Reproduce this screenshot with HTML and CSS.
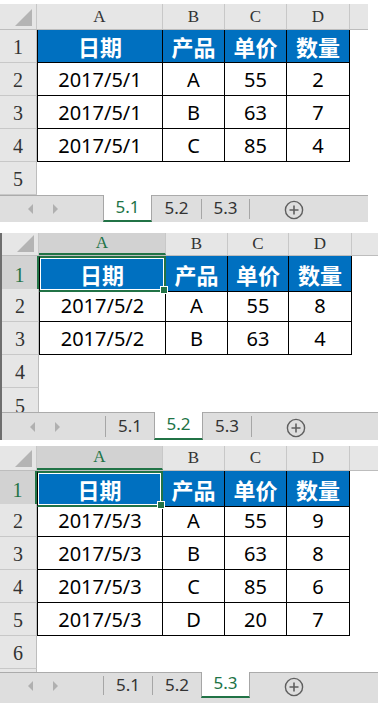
FILE: index.html
```html
<!DOCTYPE html>
<html lang="zh-CN">
<head>
    <meta charset="UTF-8">
    <meta name="viewport" content="width=device-width, initial-scale=1.0">
    <title>销售表 5.1 - 5.3</title>
    <link rel="stylesheet" href="styles.css">
</head>
<body>

    <!-- Sheet 5.1 -->
    <section class="sheet sheet-1">
        <div class="colhead">
            <div class="corner"><span class="tri"></span></div>
            <div class="ch">A</div>
            <div class="ch">B</div>
            <div class="ch">C</div>
            <div class="ch">D</div>
            <div class="ch fill"></div>
        </div>
        <div class="row">
            <div class="rh">1</div>
            <div class="cell hd first">日期</div>
            <div class="cell hd">产品</div>
            <div class="cell hd">单价</div>
            <div class="cell hd">数量</div>
        </div>
        <div class="row">
            <div class="rh">2</div>
            <div class="cell first">2017/5/1</div>
            <div class="cell">A</div>
            <div class="cell">55</div>
            <div class="cell">2</div>
        </div>
        <div class="row">
            <div class="rh">3</div>
            <div class="cell first">2017/5/1</div>
            <div class="cell">B</div>
            <div class="cell">63</div>
            <div class="cell">7</div>
        </div>
        <div class="row">
            <div class="rh">4</div>
            <div class="cell first">2017/5/1</div>
            <div class="cell">C</div>
            <div class="cell">85</div>
            <div class="cell">4</div>
        </div>
        <div class="row">
            <div class="rh">5</div>
        </div>
        <div class="tabs">
            <div class="nav"><span class="arr left"></span><span class="arr right"></span></div>
            <div class="tab active">5.1</div>
            <div class="tab">5.2</div>
            <div class="tab">5.3</div>
            <div class="add">
                <svg width="20" height="20" viewBox="0 0 20 20">
                    <circle cx="10" cy="10" r="8.6" fill="none" stroke="#5f5f5f" stroke-width="1.4"/>
                    <path d="M10 5.5v9M5.5 10h9" stroke="#5f5f5f" stroke-width="1.6"/>
                </svg>
            </div>
        </div>
    </section>

    <!-- Sheet 5.2 -->
    <section class="sheet sheet-2">
        <div class="colhead">
            <div class="corner"><span class="tri"></span></div>
            <div class="ch sel">A</div>
            <div class="ch">B</div>
            <div class="ch">C</div>
            <div class="ch">D</div>
            <div class="ch fill"></div>
        </div>
        <div class="row">
            <div class="rh sel">1</div>
            <div class="cell hd first active-cell">日期<span class="handle"></span></div>
            <div class="cell hd">产品</div>
            <div class="cell hd">单价</div>
            <div class="cell hd">数量</div>
        </div>
        <div class="row">
            <div class="rh">2</div>
            <div class="cell first">2017/5/2</div>
            <div class="cell">A</div>
            <div class="cell">55</div>
            <div class="cell">8</div>
        </div>
        <div class="row">
            <div class="rh">3</div>
            <div class="cell first">2017/5/2</div>
            <div class="cell">B</div>
            <div class="cell">63</div>
            <div class="cell">4</div>
        </div>
        <div class="row">
            <div class="rh">4</div>
        </div>
        <div class="row cut">
            <div class="rh">5</div>
        </div>
        <div class="tabs">
            <div class="nav"><span class="arr left"></span><span class="arr right"></span></div>
            <div class="tab">5.1</div>
            <div class="tab active">5.2</div>
            <div class="tab">5.3</div>
            <div class="add">
                <svg width="20" height="20" viewBox="0 0 20 20">
                    <circle cx="10" cy="10" r="8.6" fill="none" stroke="#5f5f5f" stroke-width="1.4"/>
                    <path d="M10 5.5v9M5.5 10h9" stroke="#5f5f5f" stroke-width="1.6"/>
                </svg>
            </div>
        </div>
    </section>

    <!-- Sheet 5.3 -->
    <section class="sheet sheet-3">
        <div class="colhead">
            <div class="corner"><span class="tri"></span></div>
            <div class="ch sel">A</div>
            <div class="ch">B</div>
            <div class="ch">C</div>
            <div class="ch">D</div>
            <div class="ch fill"></div>
        </div>
        <div class="row">
            <div class="rh sel">1</div>
            <div class="cell hd first active-cell">日期<span class="handle"></span></div>
            <div class="cell hd">产品</div>
            <div class="cell hd">单价</div>
            <div class="cell hd">数量</div>
        </div>
        <div class="row">
            <div class="rh">2</div>
            <div class="cell first">2017/5/3</div>
            <div class="cell">A</div>
            <div class="cell">55</div>
            <div class="cell">9</div>
        </div>
        <div class="row">
            <div class="rh">3</div>
            <div class="cell first">2017/5/3</div>
            <div class="cell">B</div>
            <div class="cell">63</div>
            <div class="cell">8</div>
        </div>
        <div class="row">
            <div class="rh">4</div>
            <div class="cell first">2017/5/3</div>
            <div class="cell">C</div>
            <div class="cell">85</div>
            <div class="cell">6</div>
        </div>
        <div class="row">
            <div class="rh">5</div>
            <div class="cell first">2017/5/3</div>
            <div class="cell">D</div>
            <div class="cell">20</div>
            <div class="cell">7</div>
        </div>
        <div class="row">
            <div class="rh">6</div>
        </div>
        <div class="row sliver">
            <div class="rh"></div>
        </div>
        <div class="tabs">
            <div class="nav"><span class="arr left"></span><span class="arr right"></span></div>
            <div class="tab">5.1</div>
            <div class="tab">5.2</div>
            <div class="tab active">5.3</div>
            <div class="add">
                <svg width="20" height="20" viewBox="0 0 20 20">
                    <circle cx="10" cy="10" r="8.6" fill="none" stroke="#5f5f5f" stroke-width="1.4"/>
                    <path d="M10 5.5v9M5.5 10h9" stroke="#5f5f5f" stroke-width="1.6"/>
                </svg>
            </div>
        </div>
    </section>

</body>
</html>
```

FILE: styles.css
```css
/* Basic reset */
html, body {
    margin: 0;
    padding: 0;
    background: #fff;
}

body {
    width: 378px;
    overflow: hidden;
}

/* One screenshot of a worksheet */
.sheet {
    --rh: 37px;
    --a: 126px;
    --b: 62px;
    --c: 62px;
    --d: 63px;
    --hh: 26px;
    --row: 33px;
    display: flex;
    flex-direction: column;
    font-family: "Noto Sans", "Noto Sans CJK SC", sans-serif;
}

.sheet-1 {
    width: 368px;
    margin-top: 4px;
}

.sheet-2 {
    --rh: 37px;
    --a: 127px;
    --b: 62px;
    --c: 61px;
    --d: 63px;
    --hh: 23px;
    width: 376px;
    margin-top: 11px;
    border-left: 2px solid #6e6e6e;
}

.sheet-3 {
    --hh: 25px;
    width: 378px;
    margin-top: 6px;
}

/* Column header strip */
.colhead {
    display: grid;
    grid-template-columns: var(--rh) var(--a) var(--b) var(--c) var(--d) 1fr;
    height: var(--hh);
    background: #e6e6e6;
    border-bottom: 1px solid #bdbdbd;
    box-sizing: border-box;
}

.corner {
    position: relative;
    border-right: 1px solid #c8c8c8;
}

.corner .tri {
    position: absolute;
    right: 4px;
    bottom: 3px;
    width: 0;
    height: 0;
    border-left: 17px solid transparent;
    border-bottom: 17px solid #b4b4b4;
}

.ch {
    display: flex;
    align-items: center;
    justify-content: center;
    font-family: "Liberation Serif", serif;
    font-size: 17px;
    color: #333;
    border-right: 1px solid #c8c8c8;
}

.ch.fill {
    border-right: none;
}

.ch.sel {
    background: #d2d2d2;
    color: #217346;
    border-bottom: 2px solid #217346;
}

/* Body rows */
.row {
    display: grid;
    grid-template-columns: var(--rh) var(--a) var(--b) var(--c) var(--d) 1fr;
    height: var(--row);
}

.row.cut {
    height: 24px;
    overflow: hidden;
}

.row.cut .rh {
    height: var(--row);
    border-bottom: none;
}

.row.sliver {
    height: 3px;
    overflow: hidden;
}

.rh {
    display: flex;
    align-items: center;
    justify-content: center;
    padding-top: 3px;
    box-sizing: border-box;
    background: #e6e6e6;
    border-right: 1px solid #bdbdbd;
    border-bottom: 1px solid #c8c8c8;
    font-family: "Liberation Serif", serif;
    font-size: 20px;
    color: #333;
}

.rh.sel {
    background: #d2d2d2;
    color: #217346;
    border-right: 2px solid #217346;
}

.cell {
    display: flex;
    align-items: center;
    justify-content: center;
    box-sizing: border-box;
    border-right: 1px solid #000;
    border-bottom: 1px solid #000;
    font-size: 20px;
    color: #000;
}

.cell.first {
    border-left: 1px solid #000;
}

.cell.hd {
    background: #0070c0;
    color: #fff;
    font-family: "Noto Sans CJK SC", sans-serif;
    font-weight: bold;
    font-size: 22px;
}

/* Selected cell A1 */
.active-cell {
    position: relative;
    border: 2px solid #217346;
    box-shadow: inset 0 0 0 1px #fff;
}

.handle {
    position: absolute;
    right: -4px;
    bottom: -4px;
    width: 6px;
    height: 6px;
    background: #217346;
    border: 1px solid #fff;
}

/* Sheet tab strip */
.tabs {
    display: flex;
    align-items: stretch;
    height: 27px;
    background: #dedede;
    border-top: 1px solid #ababab;
    box-sizing: border-box;
}

.sheet-2 .tabs {
    height: 28px;
}

.sheet-3 .tabs {
    height: 31px;
    padding-bottom: 5px;
}

.nav {
    display: flex;
    align-items: center;
    gap: 20px;
    width: 103px;
    padding-left: 28px;
    box-sizing: border-box;
}

.arr {
    width: 0;
    height: 0;
    border-top: 5px solid transparent;
    border-bottom: 5px solid transparent;
}

.arr.left {
    border-right: 5px solid #b0b0b0;
}

.arr.right {
    border-left: 5px solid #b0b0b0;
}

.tab {
    display: flex;
    align-items: center;
    justify-content: center;
    width: 49px;
    margin: 3px 0 3px;
    border-left: 1px solid #a6a6a6;
    font-size: 17px;
    color: #333;
    padding-bottom: 3px;
    box-sizing: border-box;
}

.tab:nth-of-type(4) {
    border-right: 1px solid #a6a6a6;
}

.tab.active {
    margin: -1px 0 0;
    background: #fff;
    color: #217346;
    border-left: 1px solid #a6a6a6;
    border-right: 1px solid #a6a6a6;
    border-bottom: 2px solid #217346;
}

.tab.active + .tab {
    border-left: none;
}

.add {
    display: flex;
    align-items: center;
    justify-content: center;
    width: 88px;
    padding-top: 2px;
}
```
